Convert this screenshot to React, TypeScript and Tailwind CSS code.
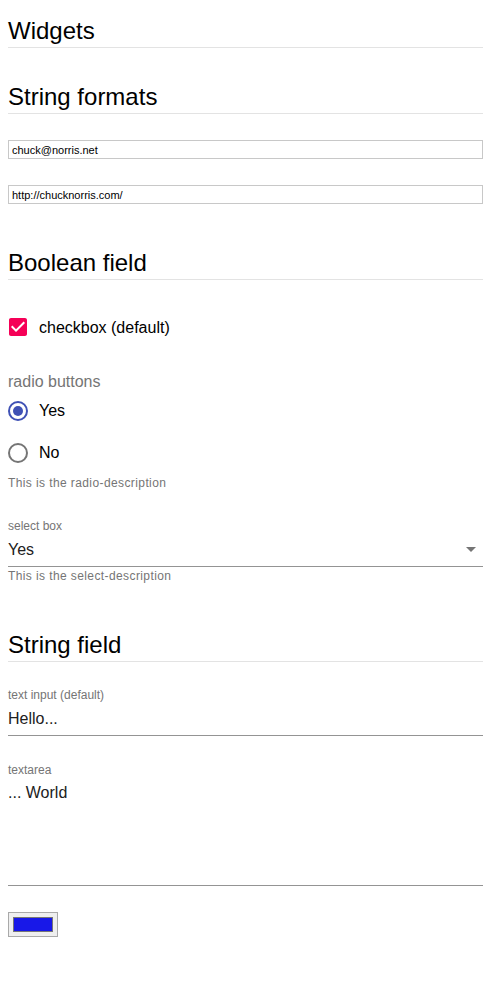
import React from "react";

function Heading({ children, className = "" }: { children: React.ReactNode; className?: string }) {
  return (
    <div className={"text-[24px] leading-[28px] pb-[2px] text-black border-b border-[#e3e3e3] " + className}>
      {children}
    </div>
  );
}

function Radio({ checked, label }: { checked: boolean; label: string }) {
  return (
    <label className="flex items-center h-[42px]">
      <svg width="24" height="24" viewBox="0 0 24 24" className="-ml-[2px]">
        <circle
          cx="12"
          cy="12"
          r="9"
          fill="none"
          stroke={checked ? "#3f51b5" : "#757575"}
          strokeWidth="2"
        />
        {checked && <circle cx="12" cy="12" r="5" fill="#3f51b5" />}
      </svg>
      <span className="ml-[9px] text-[16px] leading-[19px] pb-[1px] text-black">{label}</span>
    </label>
  );
}

export default function App() {
  return (
    <div className="px-2 pt-[17px] pb-10 font-['Liberation_Sans',Arial,sans-serif] bg-white min-h-[1000px]">
      <Heading>Widgets</Heading>
      <Heading className="mt-[35px]">String formats</Heading>

      <input
        readOnly
        value="chuck@norris.net"
        className="mt-[26px] block w-full h-[19px] border border-[#c8c8c8] px-[3px] text-[11px] text-black outline-none"
      />
      <input
        readOnly
        value="http://chucknorris.com/"
        className="mt-[26px] block w-full h-[19px] border border-[#c8c8c8] px-[3px] text-[11px] text-black outline-none"
      />

      <Heading className="mt-[45px]">Boolean field</Heading>

      <label className="mt-[26px] flex items-center h-[42px]">
        <svg width="24" height="24" viewBox="0 0 24 24" className="-ml-[2px]">
          <path
            fill="#f50057"
            d="M19 3H5c-1.11 0-2 .9-2 2v14c0 1.1.89 2 2 2h14c1.11 0 2-.9 2-2V5c0-1.1-.89-2-2-2zm-9 14l-5-5 1.41-1.41L10 14.17l7.59-7.59L19 8l-9 9z"
          />
        </svg>
        <span className="ml-[9px] text-[16px] leading-[19px] text-black">checkbox (default)</span>
      </label>

      <div className="mt-[25px] h-[17px] text-[16px] leading-[18px] text-[#757575]">radio buttons</div>
      <Radio checked label="Yes" />
      <Radio checked={false} label="No" />
      <div className="mt-[2px] text-[12px] leading-[14px] tracking-[0.4px] text-[#757575]">
        This is the radio-description
      </div>

      <div className="mt-[29px] h-[13px] text-[12px] leading-[14px] text-[#757575]">select box</div>
      <div className="h-[35px] border-b border-[#949494] flex items-center justify-between">
        <span className="text-[16px] leading-[19px] text-[#212121]">Yes</span>
        <svg width="24" height="24" viewBox="0 0 24 24">
          <path d="M7 10l5 5 5-5z" fill="#757575" />
        </svg>
      </div>
      <div className="mt-[2px] text-[12px] leading-[14px] tracking-[0.4px] text-[#757575]">
        This is the select-description
      </div>

      <Heading className="mt-[48px]">String field</Heading>

      <div className="mt-[26px] h-[13px] text-[12px] leading-[14px] text-[#757575]">text input (default)</div>
      <div className="h-[35px] border-b border-[#949494] flex items-center">
        <span className="text-[16px] leading-[19px] text-[#212121]">Hello...</span>
      </div>

      <div className="mt-[27px] h-[13px] text-[12px] leading-[14px] text-[#757575]">textarea</div>
      <div className="h-[110px] border-b border-[#949494] pt-[7px]">
        <div className="text-[16px] leading-[19px] text-[#212121]">... World</div>
      </div>

      <div className="mt-[26px] w-[50px] h-[25px] border border-[#a9a9a9] bg-[#efefef] p-[4px]">
        <div className="w-full h-full border border-[#777777] bg-[#1818e8]" />
      </div>
    </div>
  );
}
